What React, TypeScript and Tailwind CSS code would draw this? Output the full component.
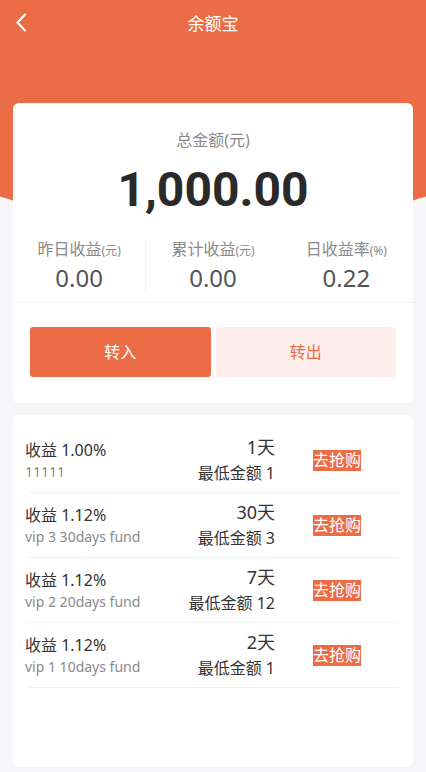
const products = [
  { rate: "1.00%", name: "11111", days: "1天", min: "1" },
  { rate: "1.12%", name: "vip 3 30days fund", days: "30天", min: "3" },
  { rate: "1.12%", name: "vip 2 20days fund", days: "7天", min: "12" },
  { rate: "1.12%", name: "vip 1 10days fund", days: "2天", min: "1" },
];

const stats = [
  { label: "昨日收益", unit: "(元)", value: "0.00" },
  { label: "累计收益", unit: "(元)", value: "0.00" },
  { label: "日收益率", unit: "(%)", value: "0.22" },
];

const App = () => {
  return (
    <div className="min-h-screen bg-[#f6f6f8] font-['Noto_Sans','Noto_Sans_CJK_SC',sans-serif] pb-[6px]">
      {/* Orange header with curved bottom */}
      <div className="h-[227px] bg-[#ec6d45] [clip-path:ellipse(426px_227px_at_50%_0)]">
        <div className="relative flex h-12 items-center justify-center">
          <button className="absolute left-[15px] top-[13px]">
            <svg width="13" height="19" viewBox="0 0 13 19" fill="none">
              <polyline points="10,1.5 2.5,9.5 10,17.5" stroke="white" strokeWidth="2.2" strokeLinecap="round" strokeLinejoin="round" />
            </svg>
          </button>
          <h1 className="text-[17px] text-white">余额宝</h1>
        </div>
      </div>

      <div className="relative -mt-[124px] px-[13px]">
        {/* Balance card */}
        <div className="rounded-md bg-white pb-[26px] pt-[26px]">
          <div className="text-center text-[16px] leading-[22px] text-[#8a8a8a]">总金额(元)</div>
          <div className="mt-[11px] text-center font-['Roboto',sans-serif] text-[48px] font-bold leading-[56px] text-[#2a2a2a]">
            1,000.00
          </div>

          <div className="mt-[20px] grid grid-cols-3 border-b border-[#f2f2f2] pb-[9px]">
            {stats.map((s, i) => (
              <div key={i} className={`text-center ${i === 0 ? "border-r border-[#f2f2f2]" : ""}`}>
                <div className="text-[16px] leading-[22px] text-[#8a8a8a]">
                  {s.label}
                  <span className="text-[12px]">{s.unit}</span>
                </div>
                <div className="mt-[1px] text-[24px] leading-[30px] text-[#555]">{s.value}</div>
              </div>
            ))}
          </div>

          <div className="mt-[24px] flex gap-[5px] px-[17px]">
            <button className="h-[50px] flex-1 rounded-[3px] bg-[#ec6d45] text-[16px] text-white">转入</button>
            <button className="h-[50px] flex-1 rounded-[3px] bg-[#fdeeec] text-[16px] text-[#ec6d45]">转出</button>
          </div>
        </div>

        {/* Product list */}
        <div className="mt-[12px] h-[352px] rounded-md bg-white pt-[13px]">
          {products.map((p, i) => (
            <div key={i} className="mx-[14px] grid h-[65px] grid-cols-3 border-b border-[#f2f2f2]">
              <div className="-ml-[2px] pt-[11px]">
                <div className="text-[16px] leading-[22px] text-[#333]">收益 {p.rate}</div>
                <div className="mt-[1px] whitespace-nowrap text-[14px] leading-[20px] text-[#8a8a8a]">{p.name}</div>
              </div>
              <div className="pt-[7px] text-right">
                <div className="text-[18px] leading-[24px] text-[#333]">{p.days}</div>
                <div className="mt-[3px] text-[16px] leading-[22px] text-[#333]">最低金额 {p.min}</div>
              </div>
              <div className="flex justify-center pt-[22px]">
                <span className="h-[21px] bg-[#ec6d45] text-[16px] leading-[21px] text-white">去抢购</span>
              </div>
            </div>
          ))}
        </div>
      </div>
    </div>
  );
};

export default App;
